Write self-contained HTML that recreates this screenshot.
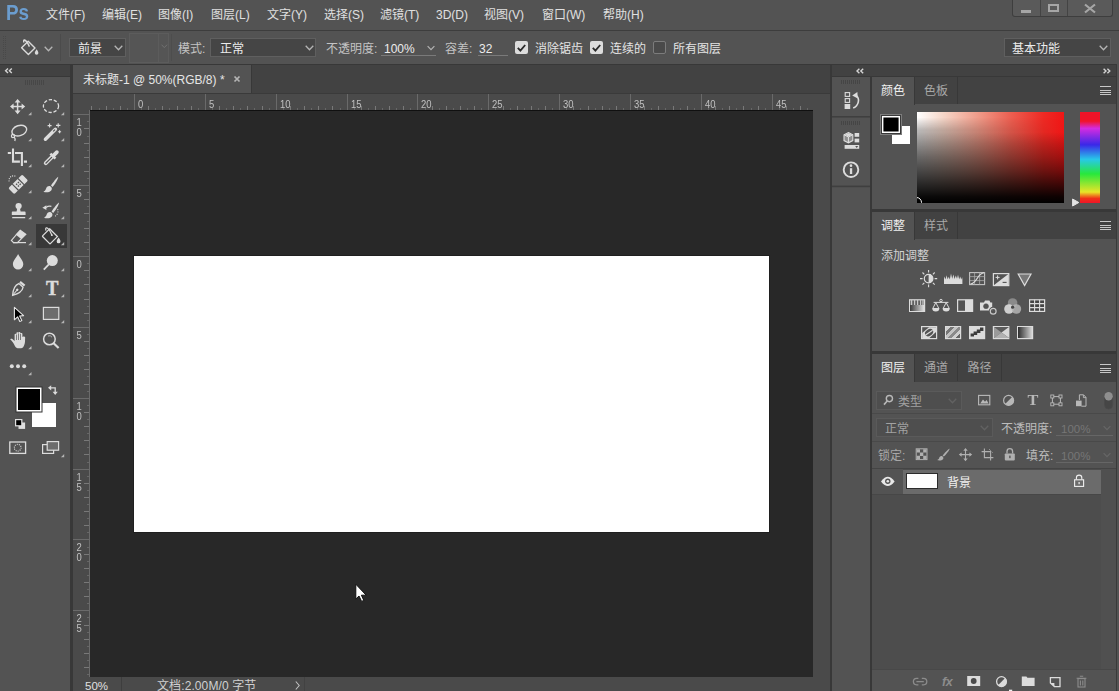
<!DOCTYPE html>
<html lang="zh-CN">
<head>
<meta charset="utf-8">
<title>Photoshop</title>
<style>
*{box-sizing:border-box;margin:0;padding:0}
html,body{width:1119px;height:691px;overflow:hidden;background:#535353}
body{position:relative;font-family:"Liberation Sans","Noto Sans CJK SC",sans-serif;font-size:12px;color:#dcdcdc;-webkit-font-smoothing:antialiased}
.abs{position:absolute}
.t{position:absolute;white-space:nowrap;line-height:16px;height:16px}
svg{position:absolute;overflow:visible}
/* ---------- menu bar ---------- */
#menubar{left:0;top:0;width:1119px;height:30px;background:#535353}
#menuline{left:0;top:30px;width:1119px;height:1px;background:#3d3d3d}
#menubar .t{top:7px;font-size:12px;color:#e0e0e0}
/* ---------- options bar ---------- */
#optbar{left:0;top:31px;width:1119px;height:33px;background:#535353}
.field{position:absolute;background:#454545;border:1px solid #5f5f5f}

#optbar .t{top:10px;font-size:12px;color:#d6d6d6}
.chev{position:absolute;width:9px;height:6px}
.chev path{fill:none;stroke:#b4b4b4;stroke-width:1.3}
.cb{position:absolute;top:10px;width:13px;height:13px;border-radius:2px;background:#dcdcdc}
.cb.off{background:#4a4a4a;border:1px solid #7c7c7c}
.cb svg{left:2px;top:3px;width:9px;height:8px}
.ul{position:absolute;height:1px;background:#7a7a7a}
.lt{font-size:11.5px}
/* ---------- dark gutters ---------- */
#gutter{left:0;top:64px;width:1119px;height:627px;background:#383838}
/* ---------- toolbar ---------- */
#tbhead{left:0;top:65px;width:70px;height:11px;background:#424242}
#toolbar{left:0;top:77px;width:70px;height:614px;background:#535353}
/* ---------- document ---------- */
#tabbar{left:73px;top:65px;width:757px;height:29px;background:#424242}
#doctab{left:73px;top:65px;width:178px;height:28px;background:#535353}
#hruler{left:73px;top:94px;width:757px;height:16px;background:#4a4a4a}
#vruler{left:73px;top:110px;width:17px;height:567px;background:#4a4a4a}
#canvas{left:90px;top:110px;width:723px;height:567px;background:#282828}
#vscroll{left:813px;top:110px;width:17px;height:567px;background:#4a4a4a}
#status{left:73px;top:677px;width:757px;height:14px;background:#4a4a4a}
#paper{left:134px;top:256px;width:635px;height:276px;background:#fff;box-shadow:0 0 0 1px #1f1f1f}
.rn{position:absolute;font-size:10.5px;line-height:10px;color:#c0c0c0;white-space:nowrap;transform:scaleX(.9);transform-origin:0 0}
/* ---------- right dock ---------- */
#rhead{left:832px;top:65px;width:287px;height:11px;background:#424242}
#strip{left:832px;top:77px;width:38px;height:614px;background:#535353}
#panels{left:872px;top:77px;width:247px;height:614px;background:#535353}
.ptabs{position:absolute;left:872px;width:247px;height:27px;background:#424242}
.ptab{position:absolute;top:0;height:27px;font-size:12px;line-height:29px;text-align:center;color:#a8a8a8;overflow:hidden;border-right:1px solid #383838}
.ptab.on{background:#535353;color:#f0f0f0;height:28px}
.pm{position:absolute;right:8px;top:9px;width:11px;height:9px;border-top:1px solid #c8c8c8;border-bottom:1px solid #c8c8c8}
.pm:before{content:"";position:absolute;left:0;top:1px;width:11px;height:1px;background:#c8c8c8;margin-top:1.5px}
.pm:after{content:"";position:absolute;left:0;top:2px;width:11px;height:1px;background:#c8c8c8;margin-top:2.5px}
.hsep{position:absolute;left:872px;width:247px;height:2px;background:#383838}
</style>
</head>
<body>
<!-- MENU BAR -->
<div id="menubar" class="abs">
  <div class="t" style="left:5.6px;top:1px;height:24px;line-height:24px;font-size:21.5px;font-weight:bold;color:#6b9dcf;transform:scaleX(0.88);transform-origin:0 0">Ps</div>
  <div class="t" style="left:46px">文件<span>(F)</span></div>
  <div class="t" style="left:102px">编辑<span>(E)</span></div>
  <div class="t" style="left:158px">图像<span>(I)</span></div>
  <div class="t" style="left:211px">图层<span>(L)</span></div>
  <div class="t" style="left:267px">文字<span>(Y)</span></div>
  <div class="t" style="left:324px">选择<span>(S)</span></div>
  <div class="t" style="left:380px">滤镜<span>(T)</span></div>
  <div class="t" style="left:436px">3D<span>(D)</span></div>
  <div class="t" style="left:484px">视图<span>(V)</span></div>
  <div class="t" style="left:542px">窗口<span>(W)</span></div>
  <div class="t" style="left:603px">帮助<span>(H)</span></div>
</div>
<div class="abs" style="left:1012px;top:0;width:101px;height:17px;background:#5a5a5a;border:1px solid #3e3e3e;border-top:0;border-radius:0 0 3px 3px">
  <div class="abs" style="left:27px;top:0;width:1px;height:16px;background:#444"></div>
  <div class="abs" style="left:54px;top:0;width:1px;height:16px;background:#444"></div>
  <div class="abs" style="left:8px;top:10px;width:10px;height:3px;background:#a6a6a6"></div>
  <div class="abs" style="left:35px;top:4px;width:11px;height:8px;border:2px solid #a6a6a6"></div>
  <svg style="left:71px;top:4px;width:12px;height:9px" viewBox="0 0 12 9"><path d="M1 0.5 L11 8.5 M11 0.5 L1 8.5" stroke="#a6a6a6" stroke-width="2.2" fill="none"/></svg>
</div>
<div id="menuline" class="abs"></div>
<!-- OPTIONS BAR -->
<div id="optbar" class="abs">
  <div class="abs" style="left:3px;top:5px;width:1px;height:23px;background:repeating-linear-gradient(#494949 0 1px,transparent 1px 2px)"></div>
  <div class="abs" style="left:5px;top:5px;width:1px;height:23px;background:repeating-linear-gradient(#494949 0 1px,transparent 1px 2px)"></div>
  <svg style="left:20px;top:7px;width:20px;height:18px" viewBox="0 0 20 18"><g fill="none" stroke="#dadada" stroke-width="1.4" stroke-linejoin="round"><path d="M8.2 3.2 L15 10 L8.4 16.6 L1.6 9.8 Z"/><path d="M9.4 8.6 C8 5.5 5.6 2.4 4.6 2 C3.6 1.8 3.4 3 4 4.6"/></g><path d="M16.6 11.2 C17.6 12.8 18.4 13.8 18.4 14.9 A1.8 1.8 0 0 1 14.8 14.9 C14.8 13.8 15.8 12.6 16.6 11.2Z" fill="#dadada"/></svg>
  <svg class="chev" style="left:44px;top:15px" viewBox="0 0 9 6"><path d="M0.7 0.8 L4.5 4.8 L8.3 0.8"/></svg>
  <div class="abs" style="left:60px;top:3px;width:1px;height:27px;background:#4b4b4b"></div>
  <div class="field" style="left:69px;top:7px;width:57px;height:19px"></div>
  <div class="t" style="left:78px;color:#ececec">前景</div>
  <svg class="chev" style="left:114px;top:14px" viewBox="0 0 9 6"><path d="M0.7 0.8 L4.5 4.8 L8.3 0.8"/></svg>
  <div class="abs" style="left:129px;top:2px;width:30px;height:30px;border:1px solid #5c5c5c;background:#555"></div>
  <div class="abs" style="left:159px;top:2px;width:10px;height:30px;border:1px solid #5c5c5c;border-left:0;background:#555"></div>
  <div class="abs" style="left:171px;top:3px;width:1px;height:27px;background:#4d4d4d"></div>
  <svg class="chev" style="left:160.8px;top:13px;width:6.6px;height:4.6px;opacity:.3" viewBox="0 0 9 6"><path d="M0.7 0.8 L4.5 4.8 L8.3 0.8"/></svg>
  <div class="t" style="left:178px;color:#c4c4c4">模式:</div>
  <div class="field" style="left:210px;top:7px;width:106px;height:19px"></div>
  <div class="t" style="left:220px;color:#ececec">正常</div>
  <svg class="chev" style="left:305px;top:14px" viewBox="0 0 9 6"><path d="M0.7 0.8 L4.5 4.8 L8.3 0.8"/></svg>
  <div class="t" style="left:326px;color:#c4c4c4">不透明度:</div>
  <div class="t lt" style="left:384px;color:#ececec">100%</div>
  <svg class="chev" style="left:427px;top:14px;width:8px" viewBox="0 0 9 6"><path d="M0.7 0.8 L4.5 4.8 L8.3 0.8"/></svg>
  <div class="ul" style="left:381px;top:24px;width:55px"></div>
  <div class="t" style="left:445px;color:#c4c4c4">容差:</div>
  <div class="t lt" style="left:479px;color:#ececec">32</div>
  <div class="ul" style="left:478px;top:24px;width:30px"></div>
  <div class="cb" style="left:515px"><svg viewBox="0 0 9 8"><path d="M0.8 3.8 L3.4 6.6 L8.2 1" fill="none" stroke="#2a2a2a" stroke-width="1.8"/></svg></div>
  <div class="t" style="left:535px;color:#e4e4e4">消除锯齿</div>
  <div class="cb" style="left:590px"><svg viewBox="0 0 9 8"><path d="M0.8 3.8 L3.4 6.6 L8.2 1" fill="none" stroke="#2a2a2a" stroke-width="1.8"/></svg></div>
  <div class="t" style="left:610px;color:#e4e4e4">连续的</div>
  <div class="cb off" style="left:653px"></div>
  <div class="t" style="left:673px;color:#e4e4e4">所有图层</div>
  <div class="field" style="left:1004px;top:7px;width:107px;height:19px"></div>
  <div class="t" style="left:1012px;color:#ececec">基本功能</div>
  <svg class="chev" style="left:1099px;top:14px" viewBox="0 0 9 6"><path d="M0.7 0.8 L4.5 4.8 L8.3 0.8"/></svg>
</div>
<!-- GUTTER -->
<div id="gutter" class="abs"></div>
<!-- TOOLBAR -->
<div id="tbhead" class="abs"></div>
<div id="toolbar" class="abs"></div>
<svg id="tools" style="left:0;top:63px;width:72px;height:628px" viewBox="0 63 72 628">
<!-- header chevrons + gripper -->
<path d="M8 68.5 L5.6 70.8 L8 73.1 M11.8 68.5 L9.4 70.8 L11.8 73.1" fill="none" stroke="#d4d4d4" stroke-width="1.4"/>
<path d="M25.5 80v5M27.5 80v5M29.5 80v5M31.5 80v5M33.5 80v5M35.5 80v5M37.5 80v5M39.5 80v5M41.5 80v5M43.5 80v5" stroke="#474747" stroke-width="1" fill="none" shape-rendering="crispEdges"/>
<!-- selected tool background -->
<rect x="36" y="224" width="31" height="24" fill="#383838"/>
<!-- corner triangles -->
<path fill="#b4b4b4" d="M31.5 112.0V115.2H28.2ZM64.2 112.0V115.2H60.9ZM31.5 138.0V141.2H28.2ZM64.2 138.0V141.2H60.9ZM31.5 164.0V167.2H28.2ZM64.2 164.0V167.2H60.9ZM31.5 190.0V193.2H28.2ZM64.2 190.0V193.2H60.9ZM31.5 216.0V219.2H28.2ZM64.2 216.0V219.2H60.9ZM31.5 242.0V245.2H28.2ZM64.2 242.0V245.2H60.9ZM31.5 268.0V271.2H28.2ZM64.2 268.0V271.2H60.9ZM31.5 294.0V297.2H28.2ZM64.2 294.0V297.2H60.9ZM31.5 320.0V323.2H28.2ZM64.2 320.0V323.2H60.9ZM31.5 346.0V349.2H28.2ZM31.5 372.0V375.2H28.2ZM64.2 454.1V457.3H60.9Z"/>
<g fill="none" stroke="#dcdcdc" stroke-width="1.5" stroke-linecap="butt" stroke-linejoin="miter">
<!-- 1 move -->
<path d="M12.5 106.5H22.7M17.6 101.5V111.7" />
<path d="M17.6 99 L20.6 102.6 H14.6Z M17.6 114.2 L20.6 110.6 H14.6Z M10 106.5 L13.6 103.5 V109.5Z M25.2 106.5 L21.6 103.5 V109.5Z" fill="#dcdcdc" stroke="none"/>
<!-- 2 ellipse marquee -->
<ellipse cx="51" cy="106.1" rx="7.6" ry="6.4" stroke-width="1.3" stroke-dasharray="3.3 1.75"/>
<!-- 3 lasso -->
<ellipse cx="19.3" cy="130.6" rx="7.6" ry="5.1" transform="rotate(-18 19.3 130.6)" stroke-width="1.4"/>
<circle cx="13" cy="136" r="1.6" stroke-width="1.2"/>
<path d="M14.2 137 C15.3 138.3 15.3 139.6 14.8 141" stroke-width="1.2"/>
<!-- 4 magic wand -->
<path d="M45.4 139.2 L55.4 129.2" stroke-width="3.4" stroke-linecap="round"/>
<path d="M53.2 131.4 L55 129.6" stroke="#535353" stroke-width="1.2"/>
<path d="M49.6 123.6v4M47.6 125.6h4M58.2 123.2v4.4M56 125.4h4.4M59.6 130.2v3M58.1 131.7h3" stroke-width="1.1"/>
<!-- 5 crop -->
<path d="M13 148.5V161.6H19.9M15 153H21.9V166M7.8 153H11.1M23.9 161.6H27" stroke-width="2.1"/>
<!-- 6 eyedropper -->
<path d="M51.8 157.2 L45.8 163.2" stroke-width="4" stroke-linecap="round"/>
<path d="M51.9 157.1 L46 163" stroke="#535353" stroke-width="1.3" stroke-linecap="round"/>
<path d="M50.4 153.6 L55.4 158.6" stroke-width="2.6"/>
<path d="M53.4 155.6 L56.9 152.1" stroke-width="3.7" stroke-linecap="round"/>
<!-- 7 healing brush -->
<g transform="rotate(-45 18.2 184.4)">
<rect x="8.4" y="180.2" width="19.6" height="8.4" rx="1.4" fill="#dcdcdc" stroke="none"/>
<path d="M14.2 180v9M22.2 180v9" stroke="#535353" stroke-width="1.2"/>
<path d="M16.5 182.5h1.4v1.4h-1.4zM19 182.5h1.4v1.4h-1.4zM16.5 185h1.4v1.4h-1.4zM19 185h1.4v1.4h-1.4z" fill="#535353" stroke="none"/>
</g>
<path d="M9.2 181.4 A4.4 4.4 0 0 1 16.4 177" stroke-width="1.2" stroke-dasharray="1 1.2"/>
<!-- 8 brush -->
<path d="M58.2 176.8 C57 177.6 52.8 182.6 51 185.6 L52.6 186.9 C55 184.4 58.4 178.6 58.2 176.8Z" fill="#dcdcdc" stroke="none"/>
<path d="M50.2 186.2 C48 185.6 46.4 187.2 46 188.8 C45.6 190.4 44.4 191.4 43.4 191.8 C46 192.8 49.6 192.4 51.2 190.4 C52.4 188.9 52 187.2 50.2 186.2Z" fill="#dcdcdc" stroke="none"/>
<!-- 9 stamp -->
<circle cx="18.6" cy="206" r="3.1" fill="#dcdcdc" stroke="none"/>
<path d="M17.2 208.4 L16.6 211.4 H12.6 C12 211.4 11.8 211.8 11.8 212.4 V215 H25.6 V212.4 C25.6 211.8 25.3 211.4 24.7 211.4 H20.6 L20 208.4Z" fill="#dcdcdc" stroke="none"/>
<path d="M12.2 217.6H25.2" stroke-width="1.3"/>
<!-- 10 history brush -->
<path d="M59 202.6 C57.8 203.3 53.4 208.4 51.6 211.6 L53.2 212.9 C55.6 210.4 59.2 204.4 59 202.6Z" fill="#dcdcdc" stroke="none"/>
<path d="M50.8 212.2 C48.6 211.6 47 213.2 46.6 214.8 C46.2 216.3 45 217.3 44 217.7 C46.6 218.7 50.2 218.3 51.8 216.4 C53 214.9 52.6 213.2 50.8 212.2Z" fill="#dcdcdc" stroke="none"/>
<path d="M42.4 207.8 L46.4 205.2 V210Z" fill="#dcdcdc" stroke="none"/>
<path d="M46 207.4 C47.6 206.2 49.6 205.9 51.4 206.3" stroke-width="1.2"/>
<path d="M57.6 209.2 A6 6 0 0 1 54.6 216.6" stroke-width="1.1" stroke-dasharray="1 1.3"/>
<!-- 11 eraser -->
<path d="M20.2 230.2 L25.8 234.4 L17.4 242.6 H13.6 L11.4 240.4Z" stroke-width="1.2"/>
<path d="M20.2 230.2 L25.8 234.4 L21.2 238.9 L15.6 234.6Z" fill="#dcdcdc" stroke="none"/>
<path d="M13 242.6H26" stroke-width="1.2"/>
<!-- 12 paint bucket -->
<path d="M49.6 231.4 L57.4 239.2 L50.6 246 C50.2 246.4 49.8 246.4 49.4 246 L42.8 239.4 C42.4 239 42.4 238.6 42.8 238.2Z" transform="translate(0 -2.6)" stroke-width="1.3"/>
<path d="M51.9 235.2 C50.4 231.8 47.9 228.2 46.8 227.8 C45.7 227.5 45.4 228.7 46 230.6" stroke-width="1.2"/>
<circle cx="51.9" cy="235.2" r="0.9" fill="#dcdcdc" stroke="none"/>
<path d="M58.6 237.6 C59.6 239.2 60.5 240.3 60.5 241.4 A1.9 1.9 0 0 1 56.7 241.4 C56.7 240.3 57.7 239.1 58.6 237.6Z" fill="#dcdcdc" stroke="none"/>
<!-- 13 blur -->
<path d="M18.1 254 C19.6 257.2 23.3 260.6 23.3 264.2 A5.2 5.2 0 0 1 12.9 264.2 C12.9 260.6 16.6 257.2 18.1 254Z" fill="#dcdcdc" stroke="none"/>
<!-- 14 dodge -->
<circle cx="52.3" cy="260.6" r="5.5" fill="#dcdcdc" stroke="none"/>
<path d="M48.8 264.4 L43.8 269.6" stroke-width="1.8"/>
<!-- 15 pen -->
<g transform="rotate(40 18.4 288.4)">
<path d="M15.4 281.2 H21.4 V283.4 H15.4Z" fill="#dcdcdc" stroke="none"/>
<path d="M15.6 284.4 H21.2 C23 287.6 22.8 291.4 18.4 297.4 C14 291.4 13.8 287.6 15.6 284.4Z" stroke-width="1.3"/>
<path d="M18.4 297 V291" stroke-width="1"/>
<circle cx="18.4" cy="290.2" r="1.2" fill="#dcdcdc" stroke="none"/>
</g>
<!-- 17 path selection -->
<path d="M14.4 307.4 V319.8 L17.6 316.8 L19.8 321.4 L21.8 320.4 L19.6 316 L23.6 315.6Z" fill="#000" stroke="#e6e6e6" stroke-width="1.1" stroke-linejoin="round"/>
<!-- 18 rectangle -->
<rect x="43.4" y="307.4" width="15.4" height="12" fill="#6c6c6c" stroke-width="1.2"/>
<!-- 19 hand -->
<path d="M13.6 343.4 C12.6 341.8 11.4 340.4 10.4 339.8 C10.2 338.6 11.6 338.4 12.6 339.2 L14.6 341 V334.6 C14.6 333.4 16.4 333.4 16.4 334.6 V333.2 C16.4 332 18.4 332 18.4 333.2 V332.8 C18.4 331.6 20.4 331.6 20.4 332.8 V334 C20.4 332.8 22.4 332.8 22.4 334 V337 C22.6 336 25.4 336.4 25.2 337.8 C24.8 340.4 25.8 343.6 23 347.4 C21 348.6 17.6 348.6 16 347.4 C14.8 346.2 14.4 344.8 13.6 343.4Z" fill="#dcdcdc" stroke="none"/>
<path d="M16.5 334.6V340M18.5 333.4V340M20.5 334V340" stroke="#535353" stroke-width="0.7"/>
<!-- 20 zoom -->
<circle cx="49.4" cy="339" r="5.8" stroke-width="1.5"/>
<path d="M53.6 343.2 L58.6 348" stroke-width="2.2"/>
<path d="M48 336 A3.2 3.2 0 0 1 52 337.2" stroke-width="0.9" stroke="#b8b8b8"/>
<!-- 21 dots -->
<g fill="#dcdcdc" stroke="none"><circle cx="11.8" cy="366.2" r="2"/><circle cx="18" cy="366.2" r="2"/><circle cx="24.2" cy="366.2" r="2"/></g>
</g>
<!-- 16 type -->
<text x="0" y="0" transform="translate(52.3 294.8) scale(0.92 1)" text-anchor="middle" font-family="Liberation Serif,serif" font-weight="bold" font-size="20.3" fill="#dcdcdc" stroke="#dcdcdc" stroke-width="0.45">T</text>
<!-- colour swatches -->
<rect x="32" y="403" width="24" height="24" fill="#fff"/>
<rect x="15.5" y="386.5" width="27" height="26" fill="#333"/>
<rect x="16.5" y="387.5" width="25" height="24" fill="#fff"/>
<rect x="18" y="389" width="22" height="21" fill="#000"/>
<!-- swap arrows -->
<g fill="none" stroke="#dcdcdc" stroke-width="1.3"><path d="M50.4 387.8 H55.2 V392.6"/></g>
<path d="M48 387.8 L51.2 385.2 V390.4Z M55.2 395 L52.6 391.8 H57.8Z" fill="#dcdcdc"/>
<!-- default colours -->
<rect x="18.5" y="422.5" width="6.6" height="6.4" fill="#e0e0e0"/>
<rect x="15" y="419" width="7.4" height="7.4" fill="#e0e0e0"/>
<rect x="16.2" y="420.2" width="5" height="5" fill="#000"/>
<!-- quick mask -->
<rect x="9.8" y="442" width="15.8" height="11.4" fill="none" stroke="#dcdcdc" stroke-width="1.3"/>
<circle cx="17.7" cy="447.7" r="3.4" fill="none" stroke="#dcdcdc" stroke-width="1.1" stroke-dasharray="1 1.1"/>
<!-- screen mode -->
<rect x="42.6" y="444.6" width="11" height="8.8" fill="none" stroke="#dcdcdc" stroke-width="1.2"/>
<rect x="47.2" y="441.6" width="11.4" height="8.6" fill="#6c6c6c" stroke="#dcdcdc" stroke-width="1.2"/>
</svg>

<!-- DOCUMENT -->
<div id="tabbar" class="abs"></div>
<div id="doctab" class="abs">
  <div class="t" id="tabtxt" style="left:10px;top:7px;font-size:12px;color:#e6e6e6">未标题-1 @ 50%(RGB/8) *</div>
  <svg style="left:161px;top:11px;width:6px;height:6px" viewBox="0 0 6 6"><path d="M0.5 0.5 L5.5 5.5 M5.5 0.5 L0.5 5.5" stroke="#b4b4b4" stroke-width="1.7" fill="none"/></svg>
</div>
<div id="tabline" class="abs" style="left:73px;top:93px;width:757px;height:1px;background:#3a3a3a"></div>
<div class="abs" style="left:251px;top:65px;width:1px;height:28px;background:#383838"></div>
<div id="hruler" class="abs"></div>
<div id="vruler" class="abs"></div>
<div id="canvas" class="abs"></div>
<svg class="abs" style="left:73px;top:94px;width:757px;height:16px" viewBox="0 0 757 16" shape-rendering="crispEdges"><path d="M26.5 14v2M40.5 14v2M54.5 14v2M68.5 14v2M82.5 14v2M96.5 14v2M111.5 14v2M125.5 14v2M139.5 14v2M153.5 14v2M167.5 14v2M181.5 14v2M196.5 14v2M210.5 14v2M224.5 14v2M238.5 14v2M252.5 14v2M267.5 14v2M281.5 14v2M295.5 14v2M309.5 14v2M323.5 14v2M337.5 14v2M352.5 14v2M366.5 14v2M380.5 14v2M394.5 14v2M408.5 14v2M422.5 14v2M437.5 14v2M451.5 14v2M465.5 14v2M479.5 14v2M493.5 14v2M507.5 14v2M522.5 14v2M536.5 14v2M550.5 14v2M564.5 14v2M578.5 14v2M592.5 14v2M607.5 14v2M621.5 14v2M635.5 14v2M649.5 14v2M663.5 14v2M678.5 14v2M692.5 14v2M706.5 14v2M720.5 14v2M734.5 14v2" stroke="#666" fill="none"/><path d="M18.5 12v4M33.5 12v4M47.5 12v4M75.5 12v4M89.5 12v4M104.5 12v4M118.5 12v4M146.5 12v4M160.5 12v4M174.5 12v4M189.5 12v4M217.5 12v4M231.5 12v4M245.5 12v4M259.5 12v4M288.5 12v4M302.5 12v4M316.5 12v4M330.5 12v4M359.5 12v4M373.5 12v4M387.5 12v4M401.5 12v4M430.5 12v4M444.5 12v4M458.5 12v4M472.5 12v4M500.5 12v4M515.5 12v4M529.5 12v4M543.5 12v4M571.5 12v4M585.5 12v4M600.5 12v4M614.5 12v4M642.5 12v4M656.5 12v4M670.5 12v4M685.5 12v4M713.5 12v4M727.5 12v4" stroke="#787878" fill="none"/><path d="M61.5 0v16M132.5 0v16M203.5 0v16M274.5 0v16M344.5 0v16M415.5 0v16M486.5 0v16M557.5 0v16M628.5 0v16M699.5 0v16" stroke="#6a6a6a" fill="none"/></svg>
<div class="rn" style="left:138px;top:99px">0</div><div class="rn" style="left:209px;top:99px">5</div><div class="rn" style="left:280px;top:99px">10</div><div class="rn" style="left:351px;top:99px">15</div><div class="rn" style="left:421px;top:99px">20</div><div class="rn" style="left:492px;top:99px">25</div><div class="rn" style="left:563px;top:99px">30</div><div class="rn" style="left:634px;top:99px">35</div><div class="rn" style="left:705px;top:99px">40</div><div class="rn" style="left:776px;top:99px">45</div>
<svg class="abs" style="left:73px;top:110px;width:17px;height:567px" viewBox="0 0 17 567" shape-rendering="crispEdges"><path d="M14 11.5h3M14 26.5h3M14 40.5h3M14 54.5h3M14 68.5h3M14 82.5h3M14 96.5h3M14 111.5h3M14 125.5h3M14 139.5h3M14 153.5h3M14 167.5h3M14 181.5h3M14 196.5h3M14 210.5h3M14 224.5h3M14 238.5h3M14 252.5h3M14 266.5h3M14 281.5h3M14 295.5h3M14 309.5h3M14 323.5h3M14 337.5h3M14 352.5h3M14 366.5h3M14 380.5h3M14 394.5h3M14 408.5h3M14 422.5h3M14 437.5h3M14 451.5h3M14 465.5h3M14 479.5h3M14 493.5h3M14 507.5h3M14 522.5h3M14 536.5h3M14 550.5h3M14 564.5h3" stroke="#666" fill="none"/><path d="M11 18.5h6M11 33.5h6M11 47.5h6M11 61.5h6M11 89.5h6M11 103.5h6M11 118.5h6M11 132.5h6M11 160.5h6M11 174.5h6M11 189.5h6M11 203.5h6M11 231.5h6M11 245.5h6M11 259.5h6M11 274.5h6M11 302.5h6M11 316.5h6M11 330.5h6M11 344.5h6M11 373.5h6M11 387.5h6M11 401.5h6M11 415.5h6M11 444.5h6M11 458.5h6M11 472.5h6M11 486.5h6M11 515.5h6M11 529.5h6M11 543.5h6M11 557.5h6" stroke="#787878" fill="none"/><path d="M0 4.5h17M0 75.5h17M0 146.5h17M0 217.5h17M0 288.5h17M0 359.5h17M0 429.5h17M0 500.5h17" stroke="#6a6a6a" fill="none"/><path d="M16.5 0v567" stroke="#6a6a6a" fill="none"/></svg>
<div class="rn" style="left:76px;top:117px;width:7px;text-align:center">1<br>0</div><div class="rn" style="left:76px;top:188px;width:7px;text-align:center">5</div><div class="rn" style="left:76px;top:259px;width:7px;text-align:center">0</div><div class="rn" style="left:76px;top:330px;width:7px;text-align:center">5</div><div class="rn" style="left:76px;top:401px;width:7px;text-align:center">1<br>0</div><div class="rn" style="left:76px;top:472px;width:7px;text-align:center">1<br>5</div><div class="rn" style="left:76px;top:542px;width:7px;text-align:center">2<br>0</div><div class="rn" style="left:76px;top:613px;width:7px;text-align:center">2<br>5</div>
<div class="abs" style="left:90px;top:110px;width:723px;height:1px;background:#101010"></div>
<div id="vscroll" class="abs"></div>
<div id="status" class="abs">
  <div class="t" style="left:12px;top:1px;font-size:11.5px;color:#e0e0e0">50%</div>
  <div class="abs" style="left:48px;top:0;width:1px;height:14px;background:#3e3e3e"></div>
  <div class="t" style="left:84px;top:1px;font-size:12px;color:#d0d0d0;letter-spacing:0.1px">文档:2.00M/0 字节</div>
  <svg style="left:222px;top:4px;width:5px;height:9px" viewBox="0 0 5 9"><path d="M0.8 0.5 L4.2 4.5 L0.8 8.5" fill="none" stroke="#c0c0c0" stroke-width="1.1"/></svg>
  <div class="abs" style="left:231px;top:0;width:1px;height:14px;background:#424242"></div>
</div>
<div id="paper" class="abs"></div>
<svg style="left:355px;top:583px;width:13px;height:20px" viewBox="0 0 13 20"><path d="M0.8 1.2 V16 L4 13 L6.6 18.4 L8.8 17.4 L6.4 12.2 H11.2Z" fill="#fff" stroke="#111" stroke-width="1" stroke-linejoin="round"/></svg>
<!-- RIGHT DOCK -->
<div id="rhead" class="abs"></div>
<div id="strip" class="abs"></div>
<div id="panels" class="abs"></div>
<!-- ===== strip icons ===== -->
<svg id="stripsvg" style="left:832px;top:63px;width:287px;height:130px" viewBox="832 63 287 130">
<path d="M859.4 68.7 L857 71 L859.4 73.3 M863.2 68.7 L860.8 71 L863.2 73.3" fill="none" stroke="#d4d4d4" stroke-width="1.4"/>
<path d="M1107.4 68.7 L1109.8 71 L1107.4 73.3 M1103.6 68.7 L1106 71 L1103.6 73.3" fill="none" stroke="#d4d4d4" stroke-width="1.4"/>
<path d="M841.5 80v4M843.5 80v4M845.5 80v4M847.5 80v4M849.5 80v4M851.5 80v4M853.5 80v4M855.5 80v4M857.5 80v4M859.5 80v4" stroke="#454545" fill="none" shape-rendering="crispEdges"/>
<path d="M841.5 121v4M843.5 121v4M845.5 121v4M847.5 121v4M849.5 121v4M851.5 121v4M853.5 121v4M855.5 121v4M857.5 121v4M859.5 121v4" stroke="#454545" fill="none" shape-rendering="crispEdges"/>
<rect x="832" y="116" width="38" height="1.6" fill="#3f3f3f"/>
<rect x="832" y="185.6" width="38" height="1.6" fill="#3f3f3f"/>
<!-- history -->
<g fill="none" stroke="#dcdcdc" stroke-width="1.1"><rect x="845.2" y="92.6" width="4.4" height="3.8"/><rect x="845.2" y="98.6" width="4.4" height="3.8"/></g>
<rect x="844.6" y="104" width="5.6" height="5" fill="#dcdcdc"/>
<path d="M853.2 108 C858.6 105.8 860.4 98.6 856 95.4" fill="none" stroke="#dcdcdc" stroke-width="1.6"/>
<path d="M852.2 95.6 L857.4 92 L857.8 98.6Z" fill="#dcdcdc"/>
<!-- 3d/properties -->
<path d="M848.4 132.6 L852.8 134.8 V140.6 L848.4 142.8 L844 140.6 V134.8Z" fill="#8e8e8e" stroke="#dcdcdc" stroke-width="1.1"/><path d="M844.2 134.8 L848.4 137 L852.6 134.8 M848.4 137 V142.6" fill="none" stroke="#e4e4e4" stroke-width="1"/><path d="M848.4 133.2 L851.8 134.8 L848.4 136.5 L845 134.8Z" fill="#dcdcdc"/>
<rect x="854.6" y="133" width="4.6" height="3.8" fill="#dcdcdc"/><rect x="854.6" y="138.6" width="4.6" height="3.8" fill="#dcdcdc"/>
<rect x="844.6" y="145" width="14.6" height="3.8" fill="#dcdcdc"/>
<path d="M855.2 146 h3 l-1.5 2Z" fill="#535353"/>
<!-- info -->
<circle cx="851" cy="169.7" r="7.3" fill="none" stroke="#dcdcdc" stroke-width="1.9"/>
<rect x="849.9" y="168.2" width="2.3" height="5.8" fill="#dcdcdc"/><circle cx="851" cy="165.7" r="1.35" fill="#dcdcdc"/>
</svg>

<!-- ===== COLOR PANEL ===== -->
<div class="ptabs" style="top:77px"><div class="ptab on" style="left:0;width:43px">颜色</div><div class="ptab" style="left:43px;width:43px">色板</div><div class="pm"></div></div>
<div class="abs" style="left:917px;top:112px;width:147px;height:91px;background:linear-gradient(to right,#fff 0%,#f6d6c8 18%,#f09a88 42%,#ec5e50 64%,#ee2a24 86%,#f01616 100%);overflow:hidden">
  <div class="abs" style="left:0;top:0;width:147px;height:91px;background:linear-gradient(to bottom,rgba(0,0,0,0) 6%,rgba(0,0,0,.28) 20%,rgba(0,0,0,.325) 35%,rgba(0,0,0,.40) 50%,rgba(0,0,0,.42) 65%,rgba(0,0,0,.40) 80%,rgba(0,0,0,.33) 100%);-webkit-mask-image:linear-gradient(to right,#000 0%,transparent 100%);mask-image:linear-gradient(to right,#000 0%,transparent 100%)"></div>
  <div class="abs" style="left:0;top:0;width:147px;height:91px;background:linear-gradient(to bottom,rgba(0,0,0,0) 22%,rgba(0,0,0,.17) 35%,rgba(0,0,0,.33) 50%,rgba(0,0,0,.52) 65%,rgba(0,0,0,.75) 80%,rgba(0,0,0,.94) 93%,#000 100%)"></div>
  <div class="abs" style="left:-6px;top:85px;width:11px;height:11px;border:1.3px solid #fff;border-radius:50%"></div>
</div>
<div class="abs" style="left:1080px;top:112px;width:20px;height:91px;background:linear-gradient(to bottom,#f01428 0%,#f01428 10%,#d42ce0 18%,#3a28e8 36%,#28c8e8 52%,#28e83c 68%,#e8e428 88%,#f03018 95%,#f01428 100%)"></div>
<svg style="left:1072px;top:198px;width:8px;height:9px" viewBox="0 0 8 9"><path d="M0.6 1 L6.8 4.5 L0.6 8Z" fill="#e4e4e4" stroke="#e4e4e4" stroke-width="1" stroke-linejoin="round"/></svg>
<div class="abs" style="left:892px;top:126px;width:18px;height:18px;background:#fff"></div>
<div class="abs" style="left:880px;top:114px;width:22px;height:21px;background:#000;border:1px solid #7c7c7c;box-shadow:inset 0 0 0 1px #3a3a3a,inset 0 0 0 2.4px #fff"></div>
<div class="hsep" style="top:209px;height:3px"></div>

<!-- ===== ADJUSTMENTS PANEL ===== -->
<div class="ptabs" style="top:212px"><div class="ptab on" style="left:0;width:43px">调整</div><div class="ptab" style="left:43px;width:43px">样式</div><div class="pm"></div></div>
<div class="t" style="left:881px;top:248px;font-size:12px;color:#d2d2d2">添加调整</div>
<svg id="adjsvg" style="left:905px;top:266px;width:150px;height:80px" viewBox="905 266 150 80">
<g fill="none" stroke="#dcdcdc" stroke-width="1.2">
<!-- row1 -->
<circle cx="928.6" cy="278.6" r="4.3"/>
<path d="M928.6 274.3 A4.3 4.3 0 0 1 928.6 282.9Z" fill="#dcdcdc" stroke="none"/>
<path d="M928.6 270v2.6M928.6 284.6v2.6M920 278.6h2.6M934.6 278.6h2.6M922.5 272.5l1.8 1.8M932.9 282.9l1.8 1.8M922.5 284.7l1.8-1.8M932.9 274.3l1.8-1.8" stroke-width="1.1"/>
<path d="M944 284 L944 279 L944.6 276.4 L945.6 279.6 L946.6 275.2 L947.6 279.2 L948.8 276.8 L949.8 279.4 L951 273.4 L952.2 278.8 L953.4 274.6 L954.6 279 L955.8 275.6 L957 278.8 L958 274.8 L959.2 279.2 L960.2 276.4 L961.2 279.4 L962.2 277.2 L962.4 279.6 V284Z" fill="#dcdcdc" stroke="none"/>
<rect x="969.6" y="272.6" width="15" height="12" stroke-width="1.1" stroke="#c4c4c4"/>
<path d="M969.6 276.6h15M969.6 280.6h15M974.6 272.6v12M979.6 272.6v12" stroke-width="0.8" stroke="#aaa"/>
<path d="M970.4 284 C977 283.6 977.4 273.2 984 272.8" stroke-width="1.1"/>
<rect x="993.4" y="273.6" width="15.4" height="12"/>
<path d="M1008.4 274 V285.2 H993.8Z" fill="#dcdcdc" stroke="none"/>
<path d="M995.6 277.4h4M997.6 275.4v4" stroke-width="1"/>
<path d="M1002.6 282.4h4" stroke="#535353" stroke-width="1.1"/>
<path d="M1018.2 274 H1031 L1024.6 285.6Z" fill="#777"/>
<!-- row2 -->
<rect x="909.6" y="299.8" width="15" height="11.6"/>
<path d="M911.6 300v5M914.6 300v5M917.6 300v5M920.6 300v5M923 300v5" stroke="#c8c8c8" stroke-width="1.4"/>
<path d="M941 300.8 V302 M933.6 302.4 H948.4 M935.8 302.6 L933 308 M935.8 302.6 L938.6 308 M946.2 302.6 L943.4 308 M946.2 302.6 L949 308" stroke-width="1"/>
<circle cx="941" cy="300.6" r="1.3" stroke-width="0.9"/>
<path d="M932.2 308 H939.4 A3.6 3.6 0 0 1 932.2 308Z M942.6 308 H949.8 A3.6 3.6 0 0 1 942.6 308Z" fill="#dcdcdc" stroke="none"/>
<rect x="957.6" y="299.8" width="15" height="11.6"/>
<rect x="965" y="299.8" width="7.6" height="11.6" fill="#dcdcdc" stroke="none"/>
<path d="M980 302.4 H984 L985 300.4 H989.4 L990.4 302.4 H992.2 V310.6 H980Z" fill="#dcdcdc" stroke="none"/>
<circle cx="986" cy="306.2" r="2.5" fill="#535353" stroke="#535353" stroke-width="0.5"/>
<circle cx="993.2" cy="311.2" r="2.9" stroke="#535353" stroke-width="3"/>
<circle cx="993.2" cy="311.2" r="2.9" stroke="#c8c8c8" stroke-width="1.2"/>
<circle cx="1012.6" cy="303" r="4.8" fill="#8a8a8a" stroke="none"/>
<circle cx="1009" cy="309" r="4.8" fill="#dcdcdc" stroke="none" opacity=".9"/>
<circle cx="1016.4" cy="309" r="4.8" fill="#b4b4b4" stroke="none" opacity=".85"/>
<circle cx="1012.6" cy="307.2" r="1.6" fill="#444" stroke="none"/>
<rect x="1029.6" y="299.8" width="15" height="11.6" fill="#444"/>
<path d="M1034.6 299.8v11.6M1039.6 299.8v11.6M1029.6 303.6h15M1029.6 307.6h15" stroke-width="1.1"/>
<!-- row3 -->
<rect x="921.6" y="326.6" width="15" height="12" />
<rect x="945.6" y="326.6" width="15" height="12" />
<rect x="969.6" y="326.6" width="15" height="12" />
<rect x="993.4" y="326.6" width="15.4" height="12" />
<rect x="1017.6" y="326.6" width="15" height="12" />
</g>
<!-- invert -->
<path d="M922.2 338 V333 L929 327.2 H936 V332 L929.4 338Z" fill="#dcdcdc"/>
<ellipse cx="929.1" cy="332.6" rx="4.4" ry="3.2" transform="rotate(-35 929.1 332.6)" fill="#535353"/>
<path d="M925.6 335 L932.6 330.2" stroke="#dcdcdc" stroke-width="1.1"/>
</svg>
<!-- gradient-filled adjustment icons -->
<div class="abs" style="left:910px;top:305px;width:14px;height:6px;background:linear-gradient(to right,#3a3a3a,#e0e0e0)"></div>
<div class="abs" style="left:946px;top:327px;width:14px;height:11px;background:linear-gradient(135deg,#d0d0d0 0 18%,#777 18% 34%,#c4c4c4 34% 50%,#8a8a8a 50% 66%,#cfcfcf 66% 82%,#666 82%)"></div>
<svg style="left:970px;top:327px;width:14px;height:11px" viewBox="0 0 14 11"><rect width="14" height="11" fill="#dcdcdc"/><path d="M0.6 9.6V6.6h3v-2h3.2v-2h3.2v-2h3.4v3.4h-3v2h-3.2v2h-3.2v1.6Z" fill="#3c3c3c"/></svg>
<svg style="left:994px;top:327px;width:15px;height:11px" viewBox="0 0 15 11"><rect width="15" height="11" fill="#5c5c5c"/><path d="M0 0 L7.5 5.5 L0 11Z" fill="#9a9a9a"/><path d="M15 0 L7.5 5.5 L15 11Z" fill="#d8d8d8"/><path d="M0 11 L7.5 5.5 L15 11Z" fill="#b0b0b0"/></svg>
<div class="abs" style="left:1018px;top:327px;width:14px;height:11px;background:linear-gradient(to right,#2e2e2e,#d6d6d6)"></div>
<div class="hsep" style="top:351px;height:3px"></div>
<!-- RIGHTEND -->
<!-- ===== LAYERS PANEL ===== -->
<div class="ptabs" style="top:354px;height:28px"><div class="ptab on" style="left:0;width:43px">图层</div><div class="ptab" style="left:43px;width:43px">通道</div><div class="ptab" style="left:86px;width:44px">路径</div><div class="pm" style="top:10px"></div></div>
<div class="abs" style="left:872px;top:413px;width:247px;height:1px;background:#494949"></div>
<div class="abs" style="left:872px;top:441px;width:247px;height:1px;background:#494949"></div>
<div class="abs" style="left:872px;top:468px;width:247px;height:1px;background:#444"></div>
<div class="abs" style="left:872px;top:469px;width:247px;height:201px;background:#4d4d4d"></div>
<div class="abs" style="left:1101px;top:469px;width:18px;height:201px;background:#505050"></div>
<div class="abs" style="left:872px;top:469px;width:31px;height:25px;background:#535353"></div>
<div class="abs" style="left:872px;top:494px;width:229px;height:1px;background:#474747"></div>
<div class="abs" style="left:903px;top:470px;width:198px;height:24px;background:#6b6b6b"></div>
<div class="abs" style="left:872px;top:669px;width:247px;height:1px;background:#484848"></div>
<!-- filter row -->
<div class="abs" style="left:876px;top:391px;width:86px;height:19px;background:#4e4e4e;border:1px solid #5a5a5a"></div>
<div class="t" style="left:898px;top:393.5px;font-size:12px;color:#a2a2a2">类型</div>
<svg class="chev" style="left:948px;top:398px;opacity:.2" viewBox="0 0 9 6"><path d="M0.7 0.8 L4.5 4.8 L8.3 0.8"/></svg>
<!-- blend row -->
<div class="abs" style="left:876px;top:418px;width:117px;height:19px;background:#4e4e4e;border:1px solid #5a5a5a"></div>
<div class="t" style="left:885px;top:421px;font-size:12px;color:#a2a2a2">正常</div>
<svg class="chev" style="left:980px;top:425px;opacity:.2" viewBox="0 0 9 6"><path d="M0.7 0.8 L4.5 4.8 L8.3 0.8"/></svg>
<div class="t" style="left:1001px;top:421px;font-size:12px;color:#bcbcbc">不透明度:</div>
<div class="t" style="left:1061px;top:421px;font-size:11.5px;color:#767676">100%</div>
<div class="ul" style="left:1056px;top:435px;width:57px;background:#666"></div>
<svg class="chev" style="left:1103px;top:425px;opacity:.2;width:8px" viewBox="0 0 9 6"><path d="M0.7 0.8 L4.5 4.8 L8.3 0.8"/></svg>
<!-- lock row -->
<div class="t" style="left:878px;top:448px;font-size:12px;color:#a8a8a8">锁定:</div>
<div class="t" style="left:1026px;top:448px;font-size:12px;color:#bcbcbc">填充:</div>
<div class="t" style="left:1061px;top:448px;font-size:11.5px;color:#767676">100%</div>
<div class="ul" style="left:1056px;top:462px;width:57px;background:#666"></div>
<svg class="chev" style="left:1103px;top:452px;opacity:.2;width:8px" viewBox="0 0 9 6"><path d="M0.7 0.8 L4.5 4.8 L8.3 0.8"/></svg>
<!-- layer row -->
<div class="abs" style="left:906px;top:473px;width:32px;height:16px;background:#fff;border:1px solid #2c2c2c"></div>
<div class="t" style="left:947px;top:475px;font-size:12px;color:#f0f0f0">背景</div>
<svg id="laysvg" style="left:872px;top:385px;width:247px;height:306px" viewBox="872 385 247 306">
<g fill="none" stroke="#b8b8b8" stroke-width="1.2">
<!-- search -->
<circle cx="889.4" cy="398.6" r="3.1" stroke-width="1.4"/><path d="M887.2 401 L884 404.6" stroke-width="1.6"/>
<!-- pixel filter -->
<rect x="978.6" y="395.4" width="11.2" height="9.4" stroke-width="1.1"/>
<path d="M980.2 403.4 L983 399.4 L985 401.8 L986.6 400 L988.6 403.4Z" fill="#b8b8b8" stroke="none"/>
<!-- adjustment filter -->
<circle cx="1008.6" cy="400.4" r="5" stroke-width="1.2"/>
<path d="M1012.2 396.9 A5 5 0 0 1 1005.1 404Z" fill="#b8b8b8" stroke="none"/>
<!-- shape filter -->
<rect x="1052.4" y="396.6" width="8" height="7.6" stroke-width="1"/>
<g fill="#535353" stroke-width="0.9"><rect x="1050.8" y="395" width="3" height="3"/><rect x="1059" y="395" width="3" height="3"/><rect x="1050.8" y="402.8" width="3" height="3"/><rect x="1059" y="402.8" width="3" height="3"/></g>
<!-- smart object -->
<path d="M1079.4 394.8 H1083.6 L1086 397.4 V406.2 H1081.4 M1079.4 394.8 V400" stroke-width="1"/>
<path d="M1083.4 395 V397.6 H1086" stroke-width="0.9"/>
<rect x="1076" y="400.6" width="5.6" height="5.6" fill="#b8b8b8" stroke="none"/>
</g>
<!-- filter toggle -->
<rect x="1104.6" y="392.6" width="8" height="16.4" rx="4" fill="#464646" stroke="#4a4a4a" stroke-width="0.8"/>
<circle cx="1108.6" cy="396.3" r="4.2" fill="#8e8e8e"/>
<!-- lock icons -->
<g fill="none" stroke="#b0b0b0" stroke-width="1.1">
<rect x="916.2" y="448.8" width="10.8" height="10.8" stroke-width="1"/>
<path d="M916.6 449.2h3.4v3.4h-3.4zM923.2 449.2h3.4v3.4h-3.4zM919.9 452.5h3.4v3.4h-3.4zM916.6 455.8h3.4v3.4h-3.4zM923.2 455.8h3.4v3.4h-3.4z" fill="#b0b0b0" stroke="none"/>
<path d="M949.6 448.4 C948.4 449 944 453.4 942.6 455.6 L943.8 456.6 C946 454.6 949.8 449.8 949.6 448.4Z" fill="#b0b0b0" stroke="none"/>
<path d="M942 456 C940.4 455.6 939.4 456.8 939.2 458 C939 459 938 459.8 937 460 C939 460.8 941.8 460.6 943 459.2 C943.8 458.2 943.4 456.8 942 456Z" fill="#b0b0b0" stroke="none"/>
<path d="M960.6 454.6H970.4M965.5 449.8V459.4" stroke-width="1.1"/>
<path d="M965.5 448 L967.7 450.8 H963.3Z M965.5 461.2 L967.7 458.4 H963.3Z M958.8 454.6 L961.6 452.4 V456.8Z M972.2 454.6 L969.4 452.4 V456.8Z" fill="#b0b0b0" stroke="none"/>
<path d="M981.6 451.6 H990.6 V460.6 M984.4 448.6 V457.6 H993.4" stroke-width="1.1"/>
<path d="M989 449 L992.6 452.6" stroke-width="1" stroke-dasharray="1 1"/>
<path d="M1007 453.4 V451.4 A2.8 2.8 0 0 1 1012.6 451.4 V453.4" stroke-width="1.3"/>
<rect x="1004.8" y="453.4" width="10" height="7" rx="0.8" fill="#b0b0b0" stroke="none"/>
<rect x="1009.2" y="455.6" width="1.4" height="2.6" fill="#535353" stroke="none"/>
</g>
<!-- eye -->
<path d="M881 481.4 C883.6 478 885.8 476.8 887.8 476.8 C889.8 476.8 892 478 894.6 481.4 C892 484.8 889.8 486 887.8 486 C885.8 486 883.6 484.8 881 481.4Z" fill="#e8e8e8"/>
<circle cx="887.8" cy="481.2" r="2.7" fill="#535353"/><circle cx="887.8" cy="481.2" r="1.3" fill="#e8e8e8"/>
<!-- layer lock -->
<path d="M1076.4 479.6 V477.8 A2.7 2.7 0 0 1 1081.8 477.8 V479.6" fill="none" stroke="#f0f0f0" stroke-width="1.1"/>
<rect x="1074.6" y="479.8" width="9" height="6.6" fill="none" stroke="#f0f0f0" stroke-width="1.1"/>
<rect x="1078.5" y="482" width="1.2" height="2.2" fill="#f0f0f0"/>
<!-- bottom icons -->
<g fill="none" stroke="#8c8c8c" stroke-width="1.3">
<path d="M918.4 678.4 H916.6 A3.2 3.2 0 0 0 916.6 684.8 H918.4 M921.8 678.4 H923.6 A3.2 3.2 0 0 1 923.6 684.8 H921.8 M916.4 681.6 H923.8"/>
<rect x="1078" y="678.6" width="7" height="8.4" stroke-width="1.1"/>
<path d="M1076.6 678.2 H1086.4 M1079.8 676.2 H1083.2 M1080.4 680.4 V685.4 M1082.8 680.4 V685.4" stroke-width="1.1"/>
</g>
<text x="942" y="685.8" font-family="Liberation Sans,sans-serif" font-style="italic" font-weight="bold" font-size="12.5" fill="#8c8c8c" letter-spacing="-0.5">fx</text>
<rect x="967.2" y="676" width="13" height="10" fill="#dcdcdc"/><circle cx="973.7" cy="681" r="2.9" fill="#4a4a4a"/>
<circle cx="1001.5" cy="681.6" r="4.9" fill="none" stroke="#dcdcdc" stroke-width="1.3"/>
<path d="M1005.2 678 A5 5 0 0 1 998 685.2Z" fill="#dcdcdc"/>
<path d="M1021.8 676.4 H1026.4 L1027.4 677.8 H1034.6 V686 H1021.8Z" fill="#dcdcdc"/>
<path d="M1050.4 677.6 H1060 V686.6 H1054.4 L1050.4 683Z" fill="none" stroke="#dcdcdc" stroke-width="1.3"/>
<path d="M1050.4 683 H1054.4 V686.6Z" fill="#dcdcdc"/>
<rect x="1009" y="689.7" width="3.2" height="1.3" fill="#f0f0f0"/>
</svg>
<!-- filter-row T -->
<div class="t" style="left:1027px;top:393px;width:12px;text-align:center;font-family:'Liberation Serif',serif;font-weight:bold;font-size:13.8px;color:#b8b8b8;transform:scaleX(1.18)">T</div>
<div id="redge" class="abs" style="left:1116px;top:64px;width:3px;height:627px;background:#535353;border-left:1px solid #3a3a3a"></div>
<!-- LAYEND -->

</body>
</html>
